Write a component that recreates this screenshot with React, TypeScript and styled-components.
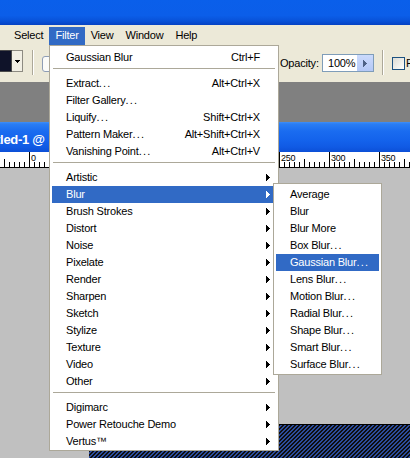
import React from 'react';
import styled, { createGlobalStyle } from 'styled-components';

const GlobalStyle = createGlobalStyle`
  html, body {
    margin: 0;
    padding: 0;
    background: #c0c0c0;
    overflow: hidden;
  }
  body {
    font-family: "Liberation Sans", Arial, sans-serif;
    font-size: 11px;
    letter-spacing: -0.2px;
    color: #000;
  }
`;

const Screen = styled.div`
  position: relative;
  width: 410px;
  height: 458px;
  overflow: hidden;
  display: flex;
  flex-direction: column;
`;

const TitleBar = styled.div`
  flex: none;
  height: 25px;
  background: linear-gradient(to bottom, #0a5fea 0%, #0b5ee9 62%, #0852d8 84%, #0542c3 100%);
`;

const MenuBar = styled.div`
  flex: none;
  height: 20px;
  box-sizing: border-box;
  padding: 2px 0 0 8px;
  background: #ece9d8;
  display: flex;
  overflow: hidden;
`;

const MenuTitle = styled.div<{ $open?: boolean }>`
  flex: none;
  height: 18px;
  line-height: 17px;
  padding: 0 6px;
  white-space: nowrap;
  background: ${p => (p.$open ? '#316ac5' : 'transparent')};
  color: ${p => (p.$open ? '#fff' : '#000')};
`;

const OptionsBar = styled.div`
  flex: none;
  height: 37px;
  background: #ece9d8;
  display: flex;
  align-items: flex-start;
  overflow: hidden;
  white-space: nowrap;

  & > * {
    flex-shrink: 0;
  }
`;

const Swatch = styled.div`
  margin-top: 5px;
  width: 12px;
  height: 22px;
  box-sizing: border-box;
  background: #0f1329;
  border: 1px solid #4a4a4a;
  border-left: none;
`;

const SwatchDrop = styled.div`
  margin-top: 5px;
  width: 11px;
  height: 22px;
  box-sizing: border-box;
  border: 1px solid #8d8b82;
  border-left: none;
  display: flex;
  align-items: center;
  justify-content: center;
  background: #f1efe4;
`;

const ToolSeparator = styled.div<{ $left: number }>`
  margin-top: 5px;
  margin-left: ${p => p.$left}px;
  width: 0;
  height: 25px;
  border-left: 1px solid #aca899;
  border-right: 1px solid #fff;
`;

const ModeButton = styled.div`
  margin-top: 11px;
  margin-left: 8px;
  width: 20px;
  height: 16px;
  box-sizing: border-box;
  border: 1px solid #8e9db5;
  border-radius: 3px;
  background: #fbfbf8;
`;

const OptionLabel = styled.div<{ $left: number; $width: number }>`
  margin-top: 9px;
  margin-left: ${p => p.$left}px;
  width: ${p => p.$width}px;
  height: 18px;
  line-height: 18px;
`;

const NumberField = styled.div`
  margin-top: 9px;
  width: 52px;
  height: 18px;
  box-sizing: border-box;
  border: 1px solid #7f9db9;
  background: #fff;
  display: flex;
`;

const FieldValue = styled.div`
  flex: 1;
  padding-left: 5px;
  line-height: 16px;
`;

const FieldArrow = styled.div`
  width: 16px;
  height: 16px;
  background: linear-gradient(to bottom, #cbdafc, #b4c8f6);
  display: flex;
  align-items: center;
  justify-content: center;
  color: #4d6185;
`;

const CheckBox = styled.div`
  margin-top: 12px;
  margin-left: 8px;
  width: 13px;
  height: 13px;
  box-sizing: border-box;
  border: 1px solid #1c5180;
  background: linear-gradient(135deg, #dcdcd5 0%, #f4f4f0 70%, #fff 100%);
`;

const CheckText = styled.div`
  margin-top: 9px;
  margin-left: 1px;
  line-height: 18px;
`;

const Workspace = styled.div`
  flex: none;
  height: 40px;
  background: #808080;
`;

const DocTitle = styled.div`
  flex: none;
  height: 30px;
  box-sizing: border-box;
  padding-top: 10px;
  overflow: hidden;
  white-space: nowrap;
  background: linear-gradient(
    to bottom,
    #3f8ff7 0px,
    #2b7ef4 2px,
    #1a6cf0 9px,
    #1463ec 18px,
    #105ae4 25px,
    #0c4fd6 30px
  );
`;

const DocName = styled.div`
  margin-left: -28px;
  color: #fff;
  font-weight: bold;
  font-size: 13px;
  letter-spacing: -0.3px;
  line-height: 16px;
`;

const Ruler = styled.div`
  flex: none;
  height: 15px;
  background: #fff;
  border-bottom: 1px solid #000;
`;

const Canvas = styled.div`
  flex: 1;
  background: #c0c0c0;
  padding-top: 256px;
  display: flex;
  flex-direction: column;
`;

const ImageArea = styled.div`
  flex: 1;
  margin-left: 89px;
  border-top: 1px solid #000;
  overflow: hidden;
`;

const Menu = styled.div<{ $left: number; $top: number; $width: number; $pad: string }>`
  position: absolute;
  left: ${p => p.$left}px;
  top: ${p => p.$top}px;
  width: ${p => p.$width}px;
  box-sizing: border-box;
  padding: ${p => p.$pad};
  background: #fff;
  border: 1px solid #aca899;
`;

const Item = styled.div<{ $hot?: boolean }>`
  height: 17px;
  margin: 0 2px;
  padding: 0 6px 0 14px;
  display: flex;
  align-items: center;
  white-space: nowrap;
  line-height: 17px;
  background: ${p => (p.$hot ? '#316ac5' : 'transparent')};
  color: ${p => (p.$hot ? '#fff' : '#000')};
`;

const ItemLabel = styled.span`
  flex: 1;
`;

const Shortcut = styled.span``;

const ArrowSlot = styled.span`
  width: 10px;
  height: 17px;
  display: flex;
  align-items: center;
  justify-content: flex-end;
`;

const Dots = styled.span`
  letter-spacing: 1.2px;
`;

const Separator = styled.div`
  height: 1px;
  margin: 2px 3px 6px;
  background: #aca899;
`;

type MenuEntry = { label: string; shortcut?: string; sub?: boolean; hot?: boolean } | 'sep';

const filterMenu: MenuEntry[] = [
  { label: 'Gaussian Blur', shortcut: 'Ctrl+F' },
  'sep',
  { label: 'Extract...', shortcut: 'Alt+Ctrl+X' },
  { label: 'Filter Gallery...' },
  { label: 'Liquify...', shortcut: 'Shift+Ctrl+X' },
  { label: 'Pattern Maker...', shortcut: 'Alt+Shift+Ctrl+X' },
  { label: 'Vanishing Point...', shortcut: 'Alt+Ctrl+V' },
  'sep',
  { label: 'Artistic', sub: true },
  { label: 'Blur', sub: true, hot: true },
  { label: 'Brush Strokes', sub: true },
  { label: 'Distort', sub: true },
  { label: 'Noise', sub: true },
  { label: 'Pixelate', sub: true },
  { label: 'Render', sub: true },
  { label: 'Sharpen', sub: true },
  { label: 'Sketch', sub: true },
  { label: 'Stylize', sub: true },
  { label: 'Texture', sub: true },
  { label: 'Video', sub: true },
  { label: 'Other', sub: true },
  'sep',
  { label: 'Digimarc', sub: true },
  { label: 'Power Retouche Demo', sub: true },
  { label: 'Vertus™', sub: true },
];

const blurMenu: MenuEntry[] = [
  { label: 'Average' },
  { label: 'Blur' },
  { label: 'Blur More' },
  { label: 'Box Blur...' },
  { label: 'Gaussian Blur...', hot: true },
  { label: 'Lens Blur...' },
  { label: 'Motion Blur...' },
  { label: 'Radial Blur...' },
  { label: 'Shape Blur...' },
  { label: 'Smart Blur...' },
  { label: 'Surface Blur...' },
];

// pixel triangle used for submenu markers and spin buttons
const RightArrow = () => (
  <svg width="4" height="7" viewBox="0 0 4 7" shapeRendering="crispEdges">
    <path d="M0 0h1v7H0z M1 1h1v5H1z M2 2h1v3H2z M3 3h1v1H3z" fill="currentColor" />
  </svg>
);

const DownArrow = () => (
  <svg width="5" height="3" viewBox="0 0 5 3" shapeRendering="crispEdges">
    <path d="M0 0h5v1H0z M1 1h3v1H1z M2 2h1v1H2z" fill="#000" />
  </svg>
);

const renderLabel = (label: string) =>
  label.endsWith('...') ? (
    <>
      {label.slice(0, -3)}
      <Dots>...</Dots>
    </>
  ) : (
    label
  );

const MenuItems = ({ entries, trailing }: { entries: MenuEntry[]; trailing: boolean }) => (
  <>
    {entries.map((e, i) =>
      e === 'sep' ? (
        <Separator key={i} />
      ) : (
        <Item key={i} $hot={e.hot}>
          <ItemLabel>{renderLabel(e.label)}</ItemLabel>
          {e.shortcut && <Shortcut>{e.shortcut}</Shortcut>}
          {trailing && <ArrowSlot>{e.sub && <RightArrow />}</ArrowSlot>}
        </Item>
      )
    )}
  </>
);

// numbers that sit behind the open Filter menu are left out
const rulerLabels = [0, 250, 300, 350];

const RulerMarks = () => {
  const ticks: React.ReactNode[] = [];
  for (let x = 4; x < 410; x += 5) {
    const units = x - 29;
    const major = units % 50 === 0;
    const mid = !major && units % 25 === 0;
    const y = major ? 0 : mid ? 7 : 10;
    ticks.push(<rect key={x} x={x} y={y} width={1} height={15 - y} fill="#000" />);
    if (major && rulerLabels.includes(units)) {
      ticks.push(
        <text key={`t${x}`} x={x + 2} y={9} fontSize={9} fontFamily="Liberation Sans, Arial, sans-serif" fill="#000">
          {units}
        </text>
      );
    }
  }
  return (
    <svg width="410" height="15" shapeRendering="crispEdges">
      {ticks}
    </svg>
  );
};

const StripeFill = () => (
  <svg width="321" height="40" shapeRendering="crispEdges">
    <defs>
      <pattern id="diag" width="4" height="4" patternUnits="userSpaceOnUse">
        <rect width="4" height="4" fill="#0e0e10" />
        <path
          d="M0 3h1v1H0z M1 2h1v1H1z M2 1h1v1H2z M3 0h1v1H3z M1 3h1v1H1z M2 2h1v1H2z M3 1h1v1H3z M0 0h1v1H0z"
          fill="#2b4c9c"
        />
      </pattern>
    </defs>
    <rect width="321" height="40" fill="url(#diag)" />
  </svg>
);

export default function App() {
  return (
    <Screen>
      <GlobalStyle />
      <TitleBar />
      <MenuBar>
        <MenuTitle>Select</MenuTitle>
        <MenuTitle $open>Filter</MenuTitle>
        <MenuTitle>View</MenuTitle>
        <MenuTitle>Window</MenuTitle>
        <MenuTitle>Help</MenuTitle>
      </MenuBar>
      <OptionsBar>
        <Swatch />
        <SwatchDrop>
          <DownArrow />
        </SwatchDrop>
        <ToolSeparator $left={9} />
        <ModeButton />
        <OptionLabel $left={218} $width={42}>Opacity:</OptionLabel>
        <NumberField>
          <FieldValue>100%</FieldValue>
          <FieldArrow>
            <RightArrow />
          </FieldArrow>
        </NumberField>
        <ToolSeparator $left={8} />
        <CheckBox />
        <CheckText>Reverse</CheckText>
      </OptionsBar>
      <Workspace />
      <DocTitle>
        <DocName>Untitled-1 @</DocName>
      </DocTitle>
      <Ruler>
        <RulerMarks />
      </Ruler>
      <Canvas>
        <ImageArea>
          <StripeFill />
        </ImageArea>
      </Canvas>

      <Menu $left={49} $top={45} $width={230} $pad="3px 0 0">
        <MenuItems entries={filterMenu} trailing />
      </Menu>
      <Menu $left={273} $top={183} $width={109} $pad="2px 0 1px">
        <MenuItems entries={blurMenu} trailing={false} />
      </Menu>
    </Screen>
  );
}
